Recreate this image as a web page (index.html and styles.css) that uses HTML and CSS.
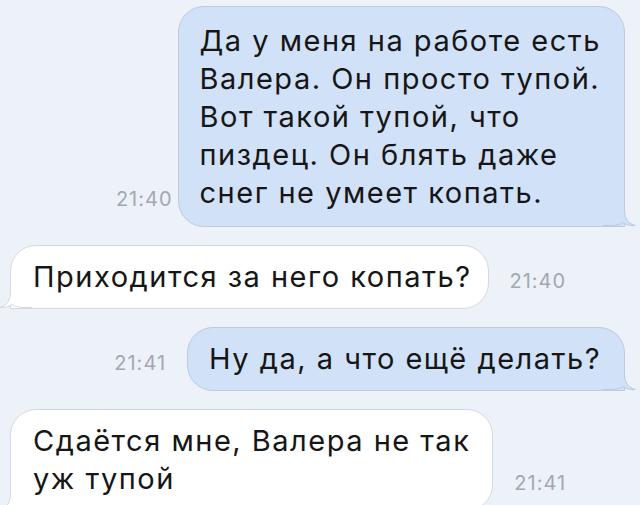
FILE: index.html
```html
<!DOCTYPE html>
<html lang="ru">
<head>
    <meta charset="UTF-8">
    <meta name="viewport" content="width=device-width, initial-scale=1.0">
    <title>Переписка</title>
    <link rel="stylesheet" href="styles.css">
</head>
<body>
    <div class="chat">
        <div class="row out first">
            <span class="time close">21:40</span>
            <div class="bubble">
                Да у меня на работе есть<br>
                Валера. Он просто тупой.<br>
                Вот такой тупой, что<br>
                пиздец. Он блять даже<br>
                снег не умеет копать.
                <svg class="tail" width="34" height="31" viewBox="0 0 34 31">
                    <path class="tail-fill" d="M0 0 H21.5 V14 C21.5 22 25 28 32.5 29.5 C28 30 23.5 29 20 26.5 C17 28.5 13 29.5 8 29.5 H0 Z"/>
                    <path class="tail-line" d="M21.5 0 V14 C21.5 22 25 28 32.5 29.5 C28 30 23.5 29 20 26.5 C17 28.5 13 29.5 8 29.5 H0"/>
                </svg>
            </div>
        </div>

        <div class="row in">
            <div class="bubble">
                Приходится за него копать?
                <svg class="tail" width="34" height="31" viewBox="0 0 34 31">
                    <path class="tail-fill" d="M0 0 H21.5 V14 C21.5 22 25 28 32.5 29.5 C28 30 23.5 29 20 26.5 C17 28.5 13 29.5 8 29.5 H0 Z"/>
                    <path class="tail-line" d="M21.5 0 V14 C21.5 22 25 28 32.5 29.5 C28 30 23.5 29 20 26.5 C17 28.5 13 29.5 8 29.5 H0"/>
                </svg>
            </div>
            <span class="time">21:40</span>
        </div>

        <div class="row out">
            <span class="time">21:41</span>
            <div class="bubble">
                Ну да, а что ещё делать?
                <svg class="tail" width="34" height="31" viewBox="0 0 34 31">
                    <path class="tail-fill" d="M0 0 H21.5 V14 C21.5 22 25 28 32.5 29.5 C28 30 23.5 29 20 26.5 C17 28.5 13 29.5 8 29.5 H0 Z"/>
                    <path class="tail-line" d="M21.5 0 V14 C21.5 22 25 28 32.5 29.5 C28 30 23.5 29 20 26.5 C17 28.5 13 29.5 8 29.5 H0"/>
                </svg>
            </div>
        </div>

        <div class="row in">
            <div class="bubble wide">
                Сдаётся мне, Валера не так<br>
                уж тупой
                <svg class="tail" width="34" height="31" viewBox="0 0 34 31">
                    <path class="tail-fill" d="M0 0 H21.5 V14 C21.5 22 25 28 32.5 29.5 C28 30 23.5 29 20 26.5 C17 28.5 13 29.5 8 29.5 H0 Z"/>
                    <path class="tail-line" d="M21.5 0 V14 C21.5 22 25 28 32.5 29.5 C28 30 23.5 29 20 26.5 C17 28.5 13 29.5 8 29.5 H0"/>
                </svg>
            </div>
            <span class="time">21:41</span>
        </div>
    </div>
</body>
</html>
```

FILE: styles.css
```css
body {
    margin: 0;
    background-color: #edf1f8;
    font-family: Inter, Roboto, "Noto Sans", Arial, sans-serif;
    color: #161616;
    overflow: hidden;
}
.chat {
    display: flex;
    flex-direction: column;
    gap: 18px;
    padding: 6px 15px 0 10px;
}
.row {
    display: flex;
    align-items: flex-end;
}
.row.out {
    justify-content: flex-end;
}
.bubble {
    position: relative;
    font-size: 29px;
    line-height: 38px;
    letter-spacing: 1.5px;
    padding: 12px 16px 12px 22px;
    border-radius: 26px;
    border: 1px solid #d3d9e2;
    background-color: #fff;
    white-space: nowrap;
}
.out .bubble {
    padding: 12px 23px 12px 21px;
    background-color: #d1e1f7;
    border-color: #bccbde;
    border-bottom-right-radius: 0;
}
.in .bubble {
    border-bottom-left-radius: 0;
}
.first .bubble {
    padding-top: 15px;
    padding-bottom: 14px;
}
.bubble.wide {
    padding-right: 22px;
}
.time {
    font-size: 20px;
    line-height: 20px;
    letter-spacing: 1px;
    color: #a3a8b0;
    margin: 0 21px 18px 21px;
}
.time.close {
    margin-right: 5px;
}
.tail {
    position: absolute;
    bottom: -1px;
    right: -13px;
}
.in .tail {
    right: auto;
    left: -13px;
    transform: scaleX(-1);
}
.tail-fill {
    fill: #d1e1f7;
}
.tail-line {
    fill: none;
    stroke: #bccbde;
    stroke-width: 1;
}
.in .tail-fill {
    fill: #fff;
}
.in .tail-line {
    stroke: #d3d9e2;
}
```
